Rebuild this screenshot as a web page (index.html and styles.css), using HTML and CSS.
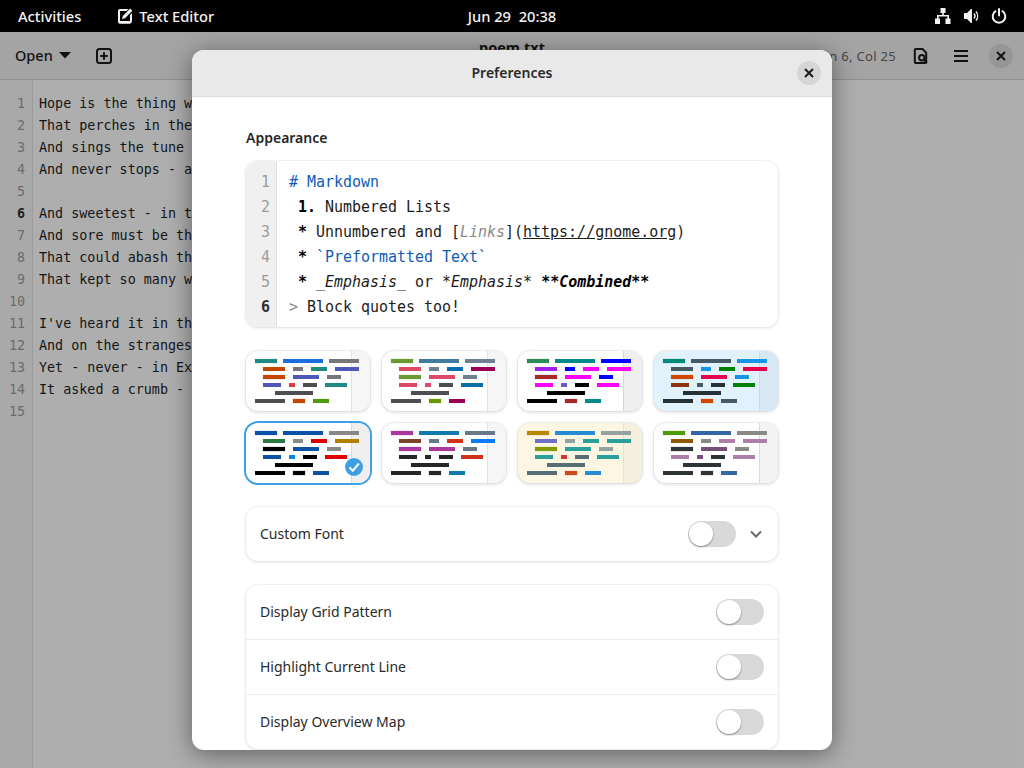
FILE: index.html
```html
<!DOCTYPE html>
<html lang="en">
<head>
<meta charset="utf-8">
<title>Preferences</title>
<link rel="stylesheet" href="styles.css">
</head>
<body>
<svg class="defs" width="0" height="0" aria-hidden="true">
  <defs>
    <pattern id="stripes" width="2" height="4" patternUnits="userSpaceOnUse">
      <rect width="2" height="4" fill="#1e9cf0"/>
      <rect x="1.200" width="0.800" height="4" fill="#0a8ae0"/>
    </pattern>
    <symbol id="scheme" viewBox="0 0 124 60">
      <rect class="side" x="105" y="0" width="19" height="60"/>
      <rect class="sideline" x="105" y="0" width="1" height="60"/>
      <rect class="a" x="9" y="8" width="22" height="4"/><rect class="b" x="37" y="8" width="40" height="4"/><rect class="c" x="83" y="8" width="30" height="4"/>
      <rect class="d" x="17" y="16" width="22" height="4"/><rect class="e" x="47" y="16" width="10" height="4"/><rect class="f" x="65" y="16" width="16" height="4"/><rect class="g" x="89" y="16" width="24" height="4"/>
      <rect class="h" x="17" y="24" width="22" height="4"/><rect class="i" x="47" y="24" width="26" height="4"/><rect class="j" x="81" y="24" width="14" height="4"/>
      <rect class="k" x="17" y="32" width="18" height="4"/><rect class="l" x="43" y="32" width="6" height="4"/><rect class="m" x="57" y="32" width="14" height="4"/><rect class="n" x="79" y="32" width="22" height="4"/>
      <rect class="o" x="29" y="40" width="38" height="4"/>
      <rect class="p" x="9" y="48" width="30" height="4"/><rect class="q" x="47" y="48" width="12" height="4"/><rect class="r" x="67" y="48" width="16" height="4"/>
    </symbol>
  </defs>
</svg>

<header class="topbar">
  <div class="top-left">
    <span class="top-item">Activities</span>
    <span class="top-app">
      <svg class="ico16" viewBox="0 0 16 16"><path class="white" d="M3 1h8.500L9.600 3H3.200A.2.2 0 0 0 3 3.200v9.600c0 .1.100.2.200.2h9.600a.2.2 0 0 0 .2-.2V7l2-2v8a3 3 0 0 1-2 2.800H3a2 2 0 0 1-2-2V3a2 2 0 0 1 2-2z"/><path class="white" d="M13.200.6 15.400 2.800 8 10.200 5 11l.8-3z"/></svg>
      <span>Text Editor</span>
    </span>
  </div>
  <div class="top-clock">Jun 29&nbsp; 20:38</div>
  <div class="top-right">
    <svg class="ico16" viewBox="0 0 16 16"><path class="white" d="M5.500 0h5v5H8.800v2H14v3.500h1.500V16h-5v-5.500H12.400V8.600H3.600v1.900H5V16H0v-5.500h2V7h5.200V5H5.500z"/></svg>
    <svg class="ico16" viewBox="0 0 16 16"><path class="white" d="M1 5h3l4-4h1v14H8l-4-4H1z"/><path class="stroke-w" d="M11 5.500a4 4 0 0 1 0 5M13 3.500a7 7 0 0 1 0 9"/></svg>
    <svg class="ico16" viewBox="0 0 16 16"><path class="stroke-p" d="M8 1v6.500M4.500 3.200a6.300 6.300 0 1 0 7 0"/></svg>
  </div>
</header>

<div class="window">
  <div class="headerbar">
    <div class="hb-left">
      <span class="open">Open<svg class="caret" viewBox="0 0 12 7"><path d="M0 0h12L6 6.500z"/></svg></span>
      <svg class="ico16" viewBox="0 0 16 16"><rect class="outline" x="1" y="1" width="14" height="14" rx="2.500"/><path class="line" d="M8 4.200v7.600M4.200 8h7.600"/></svg>
    </div>
    <div class="title">poem.txt</div>
    <div class="hb-right">
      <span class="pos">Ln 6, Col 25</span>
      <svg class="ico16 hb-ico" viewBox="0 0 16 16"><path class="outline" d="M2.800 1h6.700L13.200 4.700V14a1 1 0 0 1-1 1H2.800a1 1 0 0 1-1-1V2a1 1 0 0 1 1-1z"/><circle class="outline" cx="8.800" cy="9.800" r="2.700"/><path class="line" d="M10.800 11.800 14 15"/></svg>
      <svg class="ico16 hb-ico" viewBox="0 0 16 16"><path class="line" d="M1 3h14M1 8h14M1 13h14"/></svg>
      <span class="round-btn dark"><svg class="ico-x" viewBox="0 0 10 10"><path d="M1 1l8 8M9 1l-8 8"/></svg></span>
    </div>
  </div>
  <div class="editor">
    <div class="gutter">
      <div>1</div><div>2</div><div>3</div><div>4</div><div>5</div><div class="cur">6</div><div>7</div><div>8</div><div>9</div><div>10</div><div>11</div><div>12</div><div>13</div><div>14</div><div>15</div>
    </div>
    <div class="text">
      <div>Hope is the thing with feathers</div>
      <div>That perches in the soul</div>
      <div>And sings the tune without the words</div>
      <div>And never stops - at all</div>
      <div>&nbsp;</div>
      <div>And sweetest - in the Gale - is heard</div>
      <div>And sore must be the storm</div>
      <div>That could abash the little Bird</div>
      <div>That kept so many warm</div>
      <div>&nbsp;</div>
      <div>I've heard it in the chillest land</div>
      <div>And on the strangest Sea</div>
      <div>Yet - never - in Extremity,</div>
      <div>It asked a crumb - of me.</div>
    </div>
  </div>
</div>

<div class="backdrop"></div>

<section class="dialog">
  <div class="dlg-head">
    <span class="dlg-title">Preferences</span>
    <span class="round-btn light"><svg class="ico-x" viewBox="0 0 10 10"><path d="M1 1l8 8M9 1l-8 8"/></svg></span>
  </div>
  <div class="dlg-body">
    <h2 class="group-title">Appearance</h2>
    <div class="card preview">
      <div class="pv-gutter"><div>1</div><div>2</div><div>3</div><div>4</div><div>5</div><div class="cur">6</div></div>
      <div class="pv-code">
        <div class="blue"># Markdown</div>
        <div> <b>1.</b> Numbered Lists</div>
        <div> <b>*</b> Unnumbered and [<i class="grey">Links</i>](<u>https://gnome.org</u>)</div>
        <div> <b>*</b> <span class="blue">`Preformatted Text`</span></div>
        <div> <b>*</b> <i>_Emphasis_</i> or <i>*Emphasis*</i> <b><i>**Combined**</i></b></div>
        <div><span class="grey">&gt;</span> Block quotes too!</div>
      </div>
    </div>

    <div class="schemes">
      <div class="thumb t1"><svg viewBox="0 0 124 60"><use href="#scheme"/></svg></div>
      <div class="thumb t2"><svg viewBox="0 0 124 60"><use href="#scheme"/></svg></div>
      <div class="thumb t3"><svg viewBox="0 0 124 60"><use href="#scheme"/></svg></div>
      <div class="thumb t4"><svg viewBox="0 0 124 60"><use href="#scheme"/></svg></div>
      <div class="thumb t5 selected"><svg viewBox="0 0 124 60"><use href="#scheme"/></svg>
        <span class="check"><svg viewBox="0 0 18 18"><path d="M4.500 9.500 7.800 12.800 13.800 5.500"/></svg></span>
      </div>
      <div class="thumb t6"><svg viewBox="0 0 124 60"><use href="#scheme"/></svg></div>
      <div class="thumb t7"><svg viewBox="0 0 124 60"><use href="#scheme"/></svg></div>
      <div class="thumb t8"><svg viewBox="0 0 124 60"><use href="#scheme"/></svg></div>
    </div>

    <div class="card list">
      <div class="row">
        <span class="row-label">Custom Font</span>
        <span class="switch"></span>
        <svg class="chev" viewBox="0 0 12 8"><path d="M1 1.500 6 6.500 11 1.500"/></svg>
      </div>
    </div>

    <div class="card list">
      <div class="row"><span class="row-label">Display Grid Pattern</span><span class="switch"></span></div>
      <div class="row"><span class="row-label">Highlight Current Line</span><span class="switch"></span></div>
      <div class="row"><span class="row-label">Display Overview Map</span><span class="switch"></span></div>
    </div>
  </div>
</section>
</body>
</html>
```

FILE: styles.css
```css
* { box-sizing: border-box; }
html, body { margin: 0; height: 100%; }
body {
  width: 1024px;
  height: 768px;
  overflow: hidden;
  display: flex;
  flex-direction: column;
  font-family: "Noto Sans", sans-serif;
  font-size: 14px;
  color: #2e2e2e;
  background: #fff;
  position: relative;
}
.defs { position: absolute; }

/* top bar */
.topbar {
  flex: 0 0 32px;
  height: 32px;
  background: #000;
  color: #f2f2f2;
  display: flex;
  align-items: center;
  justify-content: space-between;
  padding: 0 17px 0 18px;
  font-weight: 500;
  font-size: 14.7px;
  position: relative;
  z-index: 3;
}
.top-left { display: flex; align-items: center; gap: 36px; }
.top-app { display: flex; align-items: center; gap: 6px; }
.top-clock {
  position: absolute;
  left: 0; right: 0;
  text-align: center;
}
.top-right { display: flex; align-items: center; gap: 12px; }
.ico16 { width: 16px; height: 16px; display: block; flex: none; }
.white { fill: #f2f2f2; }
.stroke-w { fill: none; stroke: #f2f2f2; stroke-width: 1.4; }
.stroke-p { fill: none; stroke: #f2f2f2; stroke-width: 2; stroke-linecap: round; }

/* background window */
.window { flex: 1; min-height: 0; display: flex; flex-direction: column; background: #fafafa; }
.headerbar {
  flex: 0 0 48px;
  background: #ebebeb;
  border-bottom: 1px solid #cfcfcf;
  display: flex;
  align-items: center;
  justify-content: space-between;
  position: relative;
  padding: 0 7px 0 15px;
}
.hb-left { display: flex; align-items: center; gap: 25px; }
.open { display: flex; align-items: center; gap: 6px; font-weight: 500; font-size: 14.5px; line-height: 20px; margin-top: -2px; color: #1a1a1a; }
.open .caret { margin-top: 2px; }
.caret { width: 12px; height: 7px; fill: #1a1a1a; }
.outline { fill: none; stroke: #1a1a1a; stroke-width: 2; }
.line { fill: none; stroke: #1a1a1a; stroke-width: 2; }
.title {
  position: absolute;
  left: 0; right: 0; top: 5px;
  text-align: center;
  font-weight: 700;
  font-size: 14.5px;
  color: #1a1a1a;
}
.hb-right { display: flex; align-items: center; }
.pos { font-size: 13px; color: #666; margin-right: 17px; letter-spacing: .3px; }
.hb-ico { margin-right: 24px; }
.round-btn {
  width: 24px; height: 24px;
  border-radius: 50%;
  display: flex;
  align-items: center;
  justify-content: center;
}
.round-btn.dark { background: #d7d7d7; margin-right: 4px; margin-left: -4px; }
.round-btn.light { background: #d6d6d6; }
.ico-x { width: 10px; height: 10px; fill: none; stroke: #1c1c1c; stroke-width: 2; }

.editor { flex: 1; min-height: 0; overflow: hidden; display: flex; font-family: "DejaVu Sans Mono", monospace; font-size: 13.4px; line-height: 22px; }
.gutter {
  flex: 0 0 33px;
  background: #f3f3f3;
  border-right: 1px solid #dedede;
  padding: 13px 7px 0 0;
  text-align: right;
  color: #9a9a9a;
}
.gutter .cur { color: #2e2e2e; font-weight: 700; }
.text { padding: 13px 0 0 6px; color: #1e1e1e; }
.text > div { white-space: pre; }

.backdrop {
  position: absolute;
  left: 0; right: 0; top: 32px; bottom: 0;
  background: rgba(0, 0, 0, .3);
  z-index: 1;
}

/* dialog */
.dialog {
  position: absolute;
  left: 192px; top: 50px;
  width: 640px; height: 700px;
  background: #fff;
  border-radius: 12px;
  overflow: hidden;
  z-index: 2;
  box-shadow: 0 4px 24px rgba(0, 0, 0, .45);
}
.dlg-head {
  height: 47px;
  background: #e9e9e9;
  border-bottom: 1px solid #dcdcdc;
  display: flex;
  align-items: center;
  justify-content: center;
  position: relative;
}
.dlg-title { font-weight: 600; font-size: 14px; line-height: 20px; color: #2a2a2a; }
.dlg-head .round-btn { position: absolute; right: 11px; top: 11px; }
.dlg-body { padding: 30px 54px 0; display: flex; flex-direction: column; }
.group-title { margin: 0 0 12px; font-size: 14px; line-height: 22px; font-weight: 600; color: #262626; }

.card {
  background: #fff;
  border-radius: 12px;
  box-shadow: 0 0 0 1px rgba(0, 0, 0, .03), 0 1px 3px 1px rgba(0, 0, 0, .07);
}
.preview {
  display: flex;
  height: 166px;
  overflow: hidden;
  font-family: "DejaVu Sans Mono", monospace;
  font-size: 14.96px;
  line-height: 25px;
  margin-bottom: 24px;
}
.pv-gutter {
  flex: 0 0 31px;
  background: #f0f0f0;
  border-right: 1px solid #e0e0e0;
  padding: 9px 6px 0 0;
  text-align: right;
  color: #9b9b9b;
}
.pv-gutter > div { height: 25px; }
.pv-gutter .cur { color: #2e2e2e; font-weight: 700; }
.pv-code { padding: 9px 0 0 12px; color: #1c1c1c; }
.pv-code > div { height: 25px; white-space: pre; }
.pv-code b { color: #000; }
.blue { color: #0c5cb4; }
.grey { color: #8a8a8a; }

.schemes {
  display: grid;
  grid-template-columns: repeat(4, 124px);
  grid-auto-rows: 60px;
  gap: 12px;
  margin-bottom: 24px;
}
.thumb {
  position: relative;
  border-radius: 12px;
  overflow: hidden;
  background: #fff;
  box-shadow: 0 0 0 1px rgba(0, 0, 0, .04), 0 1px 3px 1px rgba(0, 0, 0, .1);
}
.thumb > svg { display: block; width: 124px; height: 60px; }
.side { fill: var(--side, #f6f6f6); }
.sideline { fill: var(--sl, #e2e2e2); }
.a { fill: var(--a); stroke: var(--a); stroke-opacity: .2; } .b { fill: var(--b); } .c { fill: var(--c); }
.d { fill: var(--d); } .e { fill: var(--e); } .f { fill: var(--f); } .g { fill: var(--g); }
.h { fill: var(--h); stroke: var(--h); stroke-opacity: .2; } .i { fill: var(--i); } .j { fill: var(--j); }
.k { fill: var(--k); } .l { fill: var(--l); } .m { fill: var(--m); } .n { fill: var(--n); }
.o { fill: var(--o); }
.p { fill: var(--p); } .q { fill: var(--q); stroke: var(--q); stroke-opacity: .2; } .r { fill: var(--r); }

.t1 { background: #fff;
  --a:#1f8a83; --b:#1a6fdc; --c:#77767b;
  --d:#c64600; --e:#77767b; --f:#1f8a83; --g:#4f57b8;
  --h:#c64600; --i:#4f57b8; --j:#77767b;
  --k:#4f57b8; --l:#ed333b; --m:#4d4d52; --n:#1f8a83;
  --o:#4d4d52;
  --p:#4d4d52; --q:#c64600; --r:#4e9a06; }
.t2 { background: #fff;
  --a:#6b9a2f; --b:#42799f; --c:#708090;
  --d:#dc4a68; --e:#708090; --f:#0a6fa8; --g:#990055;
  --h:#6b9a2f; --i:#dc4a68; --j:#708090;
  --k:#dc4a68; --l:#dc4a68; --m:#4d4d52; --n:#0a6fa8;
  --o:#4d4d52;
  --p:#4d4d52; --q:#669900; --r:#990055; }
.t3 { background: #fff; --side:#efefef; --sl:#d6d6d6;
  --a:#2e8b57; --b:#008b8b; --c:#0000ff;
  --d:#a020f0; --e:#0000ff; --f:#ff00ff; --g:#ff00ff;
  --h:#a52a2a; --i:#ff00ff; --j:#0000ff;
  --k:#ff00ff; --l:#6a5acd; --m:#000; --n:#ff00ff;
  --o:#000;
  --p:#000; --q:#a52a2a; --r:#008b8b; }
.t4 { background: #e2f2fc; --side:#d7e8f4; --sl:#c7dbe9;
  --a:#00897b; --b:#455a64; --c:url(#stripes);
  --d:#455a64; --e:url(#stripes); --f:#008000; --g:#e6004c;
  --h:#d14700; --i:#e6004c; --j:url(#stripes);
  --k:#8a3410; --l:#455a64; --m:#263238; --n:#008000;
  --o:#263238;
  --p:#263238; --q:#d14700; --r:#455a64; }
.t5 { background: #fff; --side:#efefef; --sl:#dcdcdc;
  --a:#0a52a8; --b:#0a52a8; --c:#888;
  --d:#2b7a3f; --e:#888; --f:#e00000; --g:#b37f00;
  --h:#000; --i:#0a52a8; --j:#888;
  --k:#0a52a8; --l:#0088ee; --m:#000; --n:#e00000;
  --o:#000;
  --p:#000; --q:#000; --r:#0a52a8; }
.t6 { background: #fff;
  --a:#a9379c; --b:#0f7aad; --c:#66788a;
  --d:#7a4326; --e:#66788a; --f:#d0321a; --g:#0a7aff;
  --h:#a9379c; --i:#a9379c; --j:#66788a;
  --k:#262626; --l:#262626; --m:#262626; --n:#d0321a;
  --o:#262626;
  --p:#262626; --q:#262626; --r:#0f7aad; }
.t7 { background: #fdf6e3; --side:#f5efdf; --sl:#e8e1cf;
  --a:#b58900; --b:#268bd2; --c:#93a1a1;
  --d:#6c71c4; --e:#93a1a1; --f:#2aa198; --g:#2aa198;
  --h:#859900; --i:#2aa198; --j:#93a1a1;
  --k:#2aa198; --l:#dc322f; --m:#586e75; --n:#2aa198;
  --o:#586e75;
  --p:#586e75; --q:#cb4b16; --r:#268bd2; }
.t8 { background: #fff; --side:#f3f3f3; --sl:#dcdcdc;
  --a:#4e9a06; --b:#3465a4; --c:#888a85;
  --d:#8f5902; --e:#888a85; --f:#ad7fa8; --g:#ad7fa8;
  --h:#2e3436; --i:#75507b; --j:#888a85;
  --k:#ad7fa8; --l:#75507b; --m:#2e3436; --n:#ad7fa8;
  --o:#2e3436;
  --p:#2e3436; --q:#2e3436; --r:#3465a4; }

.selected { box-shadow: 0 0 0 2px #3f9fe3; }
.check {
  position: absolute;
  right: 7px; bottom: 7px;
  width: 18px; height: 18px;
  border-radius: 50%;
  background: #3f9fe3;
}
.check svg { display: block; width: 18px; height: 18px; fill: none; stroke: #fff; stroke-width: 2; }

.list { margin-bottom: 24px; }
.row {
  height: 54px;
  display: flex;
  align-items: center;
  padding: 0 14px;
  gap: 12px;
}
.row + .row { height: 55px; border-top: 1px solid #ebebeb; }
.row-label { flex: 1; font-size: 14px; line-height: 20px; color: #2a2a2a; }
.switch {
  position: relative;
  width: 48px; height: 26px;
  border-radius: 13px;
  background: #d9d9d9;
  flex: none;
}
.switch::after {
  content: "";
  position: absolute;
  left: 1px; top: 1px;
  width: 24px; height: 24px;
  border-radius: 50%;
  background: #fff;
  box-shadow: 0 1px 2px rgba(0, 0, 0, .4);
}
.chev { width: 12px; height: 8px; fill: none; stroke: #6a6a6a; stroke-width: 2; flex: none; margin: 0 2px 0 2px; }
```
